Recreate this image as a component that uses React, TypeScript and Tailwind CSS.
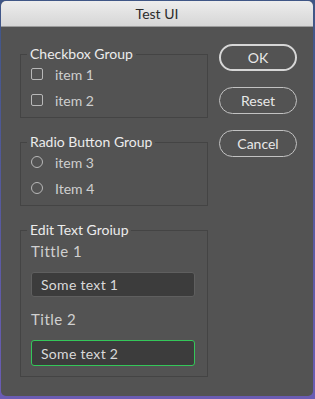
import React from 'react';

const font = { fontFamily: 'Lato, "Noto Sans", sans-serif' };

const Group: React.FC<{ title: string; className?: string; children: React.ReactNode }> = ({ title, className, children }) => (
  <fieldset className={`border border-[#444444] pl-[10px] pr-[12px] ${className ?? ''}`}>
    <legend className="ml-[-4px] px-[3px] text-[14px] leading-[12px] text-[#ececec]">{title}</legend>
    {children}
  </fieldset>
);

const CheckRow: React.FC<{ label: string }> = ({ label }) => (
  <div className="flex h-[26px] items-center gap-[12px]">
    <div className="h-[12px] w-[12px] rounded-[2px] border border-[#b8b8b8]" />
    <span className="text-[14px] text-[#cfcfcf]">{label}</span>
  </div>
);

const RadioRow: React.FC<{ label: string }> = ({ label }) => (
  <div className="flex h-[26px] items-center gap-[12px]">
    <div className="h-[12px] w-[12px] rounded-full border border-[#b8b8b8]" />
    <span className="text-[14px] text-[#cfcfcf]">{label}</span>
  </div>
);

const Button: React.FC<{ label: string; primary?: boolean }> = ({ label, primary }) => (
  <button
    className={`flex h-[27px] w-[78px] items-center justify-center rounded-full text-[14px] text-[#e8e8e8] ${
      primary ? 'border-2 border-[#d6d6d6]' : 'border-[1.5px] border-[#c2c2c2]'
    }`}
  >
    {label}
  </button>
);

export default function App() {
  return (
    <div style={font} className="h-[399px] w-[315px] bg-gradient-to-b from-[#3f5686] to-[#6b5cb4] pb-[3px] pl-[1px] pr-[2px] pt-[1px]">
      <div className="flex h-full flex-col overflow-hidden rounded-[5px] bg-[#535353]">
        <div className="flex h-[26px] items-center justify-center border-b border-[#9c9c9c] bg-gradient-to-b from-[#ededed] to-[#d6d6d6] text-[14px] text-[#2b2b2b]">
          Test UI
        </div>
        <div className="flex pl-[19px] pt-[17px]">
          <div className="flex w-[188px] flex-col gap-[18px] pt-[4px]">
            <Group title="Checkbox Group" className="pb-[4px] pt-[1px]">
              <CheckRow label="item 1" />
              <CheckRow label="item 2" />
            </Group>
            <Group title="Radio Button Group" className="pb-[4px] pt-[1px]">
              <RadioRow label="item 3" />
              <RadioRow label="Item 4" />
            </Group>
            <Group title="Edit Text Groiup" className="pb-[10px] pt-[4px]">
              <div className="text-[15px] leading-[22px] tracking-[0.5px] text-[#d0d0d0]">Tittle 1</div>
              <div className="mt-[10px] flex h-[25px] items-center rounded-[3px] border border-[#5f5f5f] bg-[#3c3c3c] px-[9px] text-[14px] tracking-[0.3px] text-[#dadada]">
                Some text 1
              </div>
              <div className="mt-[11px] text-[15px] leading-[22px] tracking-[0.5px] text-[#d0d0d0]">Title 2</div>
              <div className="mt-[10px] flex h-[26px] items-center rounded-[3px] border-[1.5px] border-[#34c759] bg-[#3c3c3c] px-[9px] text-[14px] tracking-[0.3px] text-[#dadada]">
                Some text 2
              </div>
            </Group>
          </div>
          <div className="ml-[11px] flex flex-col gap-[16px]">
            <Button label="OK" primary />
            <Button label="Reset" />
            <Button label="Cancel" />
          </div>
        </div>
      </div>
    </div>
  );
}
